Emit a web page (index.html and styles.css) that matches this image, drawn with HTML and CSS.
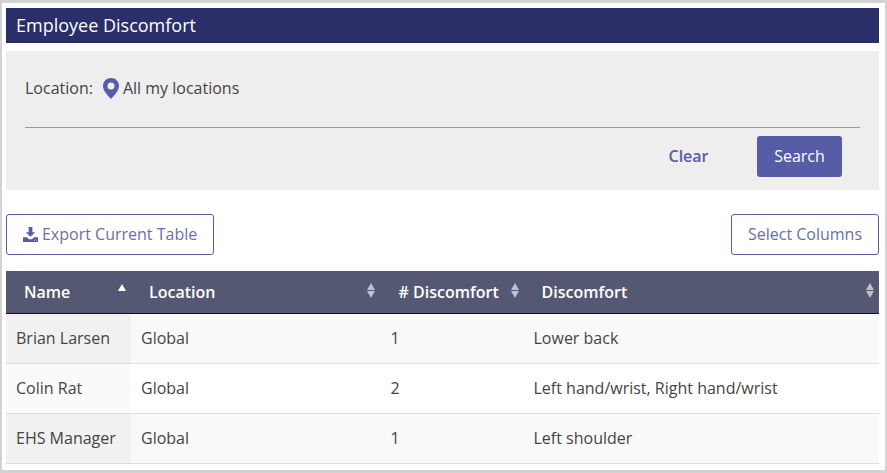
FILE: index.html
```html
<!DOCTYPE html>
<html lang="en">
<head>
    <meta charset="UTF-8">
    <meta name="viewport" content="width=device-width, initial-scale=1.0">
    <title>Employee Discomfort</title>
    <link rel="stylesheet" href="styles.css">
</head>
<body>
    <div class="frame">
        <h1 class="title">Employee Discomfort</h1>

        <div class="filters">
            <div class="location">
                <span class="location-label">Location:</span>
                <svg class="pin" viewBox="0 0 16 21" width="16" height="21">
                    <path fill-rule="evenodd" d="M8 0C3.6 0 0 3.5 0 8c0 5 5 9.500 8 13 3-3.500 8-8 8-13 0-4.500-3.600-8-8-8zm0 4.400a3.500 3.500 0 1 1 0 7 3.500 3.500 0 0 1 0-7z"/>
                </svg>
                <span>All my locations</span>
            </div>
            <div class="filter-actions">
                <button class="btn-clear">Clear</button>
                <button class="btn-search">Search</button>
            </div>
        </div>

        <div class="toolbar">
            <button class="btn-outline btn-export">
                <svg class="download" viewBox="0 0 16 16" width="15" height="15">
                    <path d="M6 0h4v5.500h3L8 10.500 3 5.500h3z"/>
                    <path fill-rule="evenodd" d="M0 11h4.200L6.500 13h3l2.300-2H16v5H0zm11.600 2.500h1v1h-1zm2 0h1v1h-1z"/>
                </svg>
                Export Current Table
            </button>
            <button class="btn-outline btn-columns">Select Columns</button>
        </div>

        <table class="grid">
            <thead>
                <tr>
                    <th class="col-name sort-asc">Name</th>
                    <th class="col-location sort">Location</th>
                    <th class="col-count sort"># Discomfort</th>
                    <th class="col-discomfort sort">Discomfort</th>
                </tr>
            </thead>
            <tbody>
                <tr>
                    <td class="sorted">Brian Larsen</td>
                    <td>Global</td>
                    <td>1</td>
                    <td>Lower back</td>
                </tr>
                <tr>
                    <td class="sorted">Colin Rat</td>
                    <td>Global</td>
                    <td>2</td>
                    <td>Left hand/wrist, Right hand/wrist</td>
                </tr>
                <tr>
                    <td class="sorted">EHS Manager</td>
                    <td>Global</td>
                    <td>1</td>
                    <td>Left shoulder</td>
                </tr>
            </tbody>
        </table>
    </div>
</body>
</html>
```

FILE: styles.css
```css
* {
    box-sizing: border-box;
}

html, body {
    height: 100%;
}

body {
    margin: 0;
    font-family: "Open Sans", sans-serif;
    font-size: 16px;
    color: #444;
    background-color: #fff;
}

.frame {
    height: 473px;
    padding: 5px 6px 0 4px;
    border: 3px solid #d3d3d3;
    border-left-width: 2px;
    border-right-width: 2px;
    overflow: hidden;
}

.title {
    margin: 0;
    height: 35px;
    padding-left: 10px;
    font-size: 18px;
    font-weight: 400;
    line-height: 35px;
    color: #fff;
    background-color: #2a2e69;
}

.filters {
    margin-top: 8px;
    height: 139px;
    padding: 0 19px;
    background-color: #eee;
}

.location {
    display: flex;
    align-items: center;
    height: 77px;
    padding-bottom: 2px;
    border-bottom: 1px solid #999;
}

.location-label {
    margin-right: 10px;
}

.pin {
    margin-right: 4px;
    fill: #565ca6;
}

.filter-actions {
    display: flex;
    justify-content: flex-end;
    align-items: center;
    margin-top: 8px;
    padding-right: 18px;
}

button {
    font-family: inherit;
    font-size: 16px;
    cursor: pointer;
}

.btn-clear {
    width: 89px;
    height: 41px;
    margin-right: 24px;
    padding: 0 0 2px;
    border: none;
    background: none;
    font-weight: 600;
    color: #565ca6;
}

.btn-search {
    width: 85px;
    height: 41px;
    padding: 0 0 2px;
    border: none;
    border-radius: 3px;
    font-weight: 500;
    color: #fff;
    background-color: #565ca6;
}

.toolbar {
    display: flex;
    justify-content: space-between;
    margin-top: 24px;
}

.btn-outline {
    height: 41px;
    padding: 0 0 2px;
    border: 1px solid #565ca6;
    border-radius: 3px;
    color: #6a6fa8;
    background-color: #fff;
}

.btn-export {
    width: 208px;
}

.btn-columns {
    width: 148px;
}

.download {
    vertical-align: -2px;
    fill: #565ca6;
}

.grid {
    width: 100%;
    margin-top: 16px;
    border-collapse: separate;
    border-spacing: 0;
    table-layout: fixed;
}

.grid th {
    position: relative;
    height: 43px;
    padding: 0 0 0 18px;
    border-bottom: 1px solid #111;
    font-weight: 600;
    text-align: left;
    color: #fff;
    background-color: #555872;
}

.col-name {
    width: 125px;
}

.col-location {
    width: 249.5px;
}

.col-count {
    width: 143px;
}

/* sort arrows sit over the right edge of the header cell */
.sort::before,
.sort::after,
.sort-asc::before {
    content: "";
    position: absolute;
    right: 5px;
    border-left: 4.5px solid transparent;
    border-right: 4.5px solid transparent;
}

.col-location::before,
.col-location::after {
    right: 6px;
}

.sort::before {
    top: 12px;
    border-bottom: 7px solid #c0c1ca;
}

.sort::after {
    top: 20px;
    border-top: 7px solid #c0c1ca;
}

.sort-asc::before {
    top: 13px;
    border-bottom: 7px solid #fff;
}

.grid td {
    height: 50px;
    padding: 0 0 2px 10px;
    border-bottom: 1px solid #ddd;
}

.grid tbody tr:nth-child(odd) td {
    background-color: #f9f9f9;
}

.grid tbody tr:nth-child(odd) td.sorted {
    background-color: #f1f1f1;
}

.grid tbody tr:nth-child(even) td.sorted {
    background-color: #fafafa;
}
```
